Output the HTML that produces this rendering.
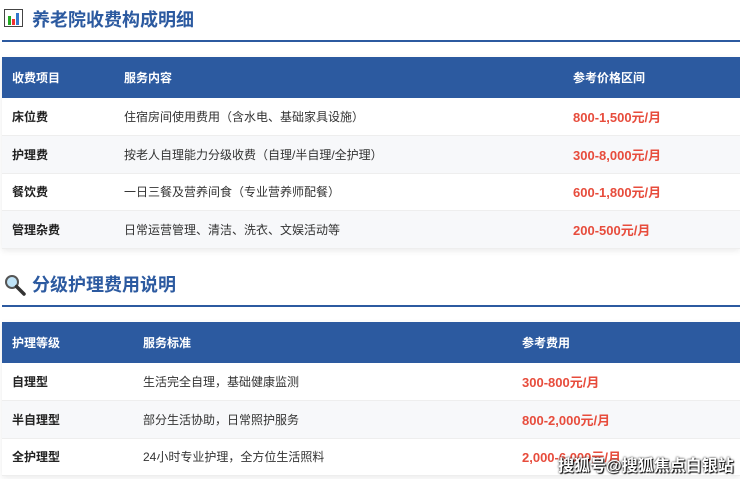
<!DOCTYPE html>
<html><head><meta charset="utf-8"><style>
*{margin:0;padding:0;box-sizing:border-box}
body{width:740px;height:479px;background:#fff;font-family:"Liberation Sans","Noto Sans CJK SC",sans-serif;position:relative;overflow:hidden}
.t{position:absolute;left:32px;font-size:18px;font-weight:bold;color:#2c5aa0;line-height:20px}
.line{position:absolute;left:2px;right:0;height:2px;background:#2c5aa0}
table{position:absolute;left:2px;width:738px;border-collapse:collapse;font-size:12px;box-shadow:0 2px 6px rgba(0,0,0,0.08)}
th{background:#2c5aa0;color:#fff;text-align:left;font-weight:bold;height:41px;padding:0 0 0 10px}
td{height:37.5px;padding:0 0 0 10px;color:#333;border-bottom:1px solid #eee;background:#fff}
td:first-child{font-weight:bold;color:#222}
tr:nth-child(odd) td{background:#f7f8fa}
td.p{color:#e74c3c;font-weight:bold;font-size:13px}
.wm{position:absolute;left:558px;top:452px;font-size:16px;color:#fff;font-weight:bold;text-shadow:0 0 2px #000,1px 1px 1px #000}
</style></head><body>
<svg style="position:absolute;left:4px;top:9px" width="19" height="18" viewBox="0 0 19 18"><rect x="0.5" y="0.5" width="18" height="17" fill="#fff" stroke="#444"/><rect x="4" y="7" width="3" height="9" fill="#2a2"/><rect x="8" y="10" width="3" height="6" fill="#e33"/><rect x="12" y="4" width="3" height="12" fill="#37c"/></svg>
<div class="t" style="top:10px">养老院收费构成明细</div>
<div class="line" style="top:40px"></div>
<table style="top:57px">
<tr><th style="width:112px">收费项目</th><th style="width:449px">服务内容</th><th>参考价格区间</th></tr>
<tr><td>床位费</td><td>住宿房间使用费用（含水电、基础家具设施）</td><td class="p">800-1,500元/月</td></tr>
<tr><td>护理费</td><td>按老人自理能力分级收费（自理/半自理/全护理）</td><td class="p">300-8,000元/月</td></tr>
<tr><td>餐饮费</td><td>一日三餐及营养间食（专业营养师配餐）</td><td class="p">600-1,800元/月</td></tr>
<tr><td>管理杂费</td><td>日常运营管理、清洁、洗衣、文娱活动等</td><td class="p">200-500元/月</td></tr>
</table>
<svg style="position:absolute;left:4px;top:274px" width="22" height="22" viewBox="0 0 22 22"><circle cx="8" cy="8" r="6" fill="#bfe3f7" stroke="#555" stroke-width="2"/><line x1="12.5" y1="12.5" x2="20" y2="20" stroke="#333" stroke-width="3.5" stroke-linecap="round"/></svg>
<div class="t" style="top:275px">分级护理费用说明</div>
<div class="line" style="top:305px"></div>
<table style="top:322px">
<tr><th style="width:131px">护理等级</th><th style="width:379px">服务标准</th><th>参考费用</th></tr>
<tr><td>自理型</td><td>生活完全自理，基础健康监测</td><td class="p">300-800元/月</td></tr>
<tr><td>半自理型</td><td>部分生活协助，日常照护服务</td><td class="p">800-2,000元/月</td></tr>
<tr><td>全护理型</td><td>24小时专业护理，全方位生活照料</td><td class="p">2,000-6,000元/月</td></tr>
</table>
<div class="wm">搜狐号@搜狐焦点白银站</div>
</body></html>
